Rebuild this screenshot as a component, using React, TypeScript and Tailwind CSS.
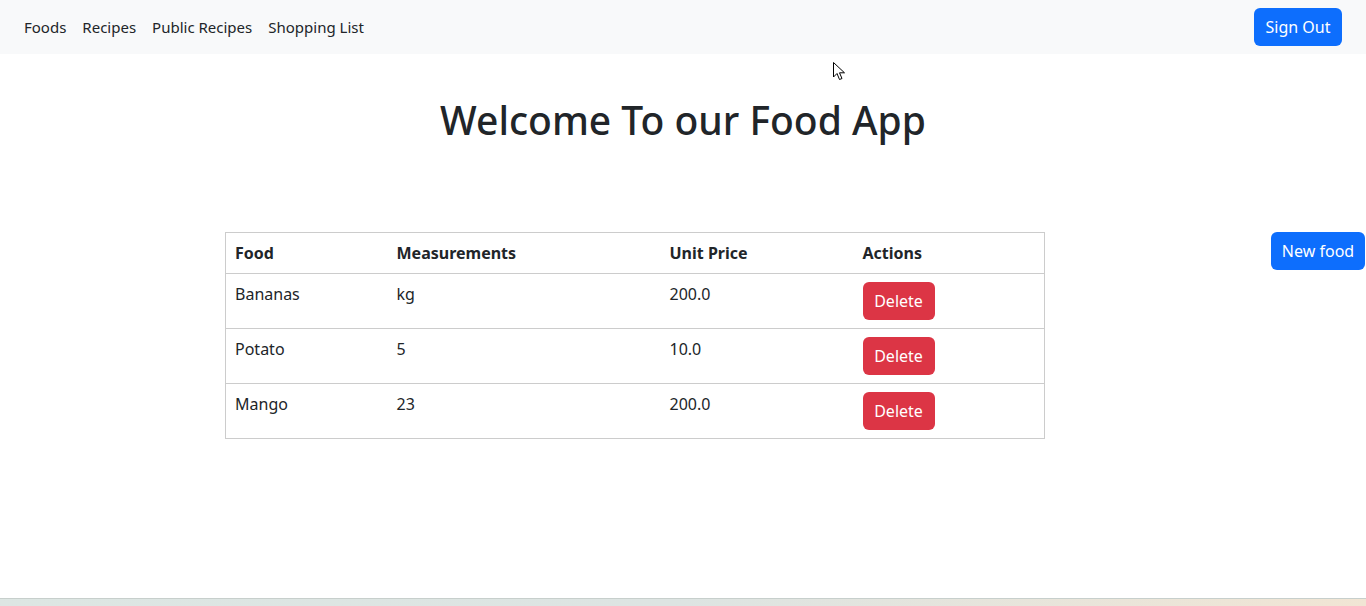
import React from "react";

const rows = [
  { food: "Bananas", m: "kg", p: "200.0" },
  { food: "Potato", m: "5", p: "10.0" },
  { food: "Mango", m: "23", p: "200.0" },
];

export default function App() {
  return (
    <div
      className="relative h-[606px] w-[1366px] overflow-hidden bg-white text-[#212529]"
      style={{ fontFamily: '"Noto Sans", "Open Sans", sans-serif' }}
    >
      <nav className="flex h-[54px] items-center bg-[#f8f9fa] pl-[16px] pr-[24px]">
        <div className="flex text-[15px] leading-[24px] text-[#212529]">
          <span className="px-[8px]">Foods</span>
          <span className="px-[8px]">Recipes</span>
          <span className="px-[8px]">Public Recipes</span>
          <span className="px-[8px]">Shopping List</span>
        </div>
        <button className="ml-auto h-[38px] w-[88px] rounded-[6px] bg-[#0d6efd] text-[16px] leading-[24px] text-white">
          Sign Out
        </button>
      </nav>

      <h1 className="mt-[42px] text-center text-[39px] font-medium leading-[48px]">
        Welcome To our Food App
      </h1>

      <div className="mt-[88px] flex items-start pl-[225px] pr-[1px]">
        <table className="w-[820px] border-collapse border border-[#cccccc] text-[16px] leading-[24px]">
          <thead>
            <tr className="border-b border-[#cccccc]">
              <th className="w-[162px] px-[9px] py-[8px] text-left font-bold">Food</th>
              <th className="w-[273px] px-[9px] py-[8px] text-left font-bold">Measurements</th>
              <th className="w-[193px] px-[9px] py-[8px] text-left font-bold">Unit Price</th>
              <th className="px-[9px] py-[8px] text-left font-bold">Actions</th>
            </tr>
          </thead>
          <tbody>
            {rows.map((r) => (
              <tr key={r.food} className="h-[55px] border-b border-[#cccccc] align-top">
                <td className="px-[9px] py-[8px]">{r.food}</td>
                <td className="px-[9px] py-[8px]">{r.m}</td>
                <td className="px-[9px] py-[8px]">{r.p}</td>
                <td className="px-[9px] pt-[8px] pb-0">
                  <button className="block h-[38px] w-[72px] rounded-[6px] bg-[#dc3545] text-white">
                    Delete
                  </button>
                </td>
              </tr>
            ))}
          </tbody>
        </table>
        <button className="ml-auto h-[38px] w-[94px] rounded-[6px] bg-[#0d6efd] text-[16px] leading-[24px] text-white">
          New food
        </button>
      </div>

      <svg
        className="absolute left-[833px] top-[62px]"
        width="13"
        height="20"
        viewBox="0 0 13 20"
      >
        <path
          d="M0.5 0.5 L0.5 15 L4 11.5 L6.5 17.5 L9 16.5 L6.5 10.8 L11.5 10.8 Z"
          fill="white"
          stroke="black"
          strokeWidth="1"
          strokeLinejoin="round"
        />
      </svg>

      <div className="absolute bottom-0 left-0 h-[8px] w-full border-t border-[#c7cfcc] bg-gradient-to-r from-[#dde6e3] via-[#dde4e2] to-[#f1e5d4]" />
    </div>
  );
}
